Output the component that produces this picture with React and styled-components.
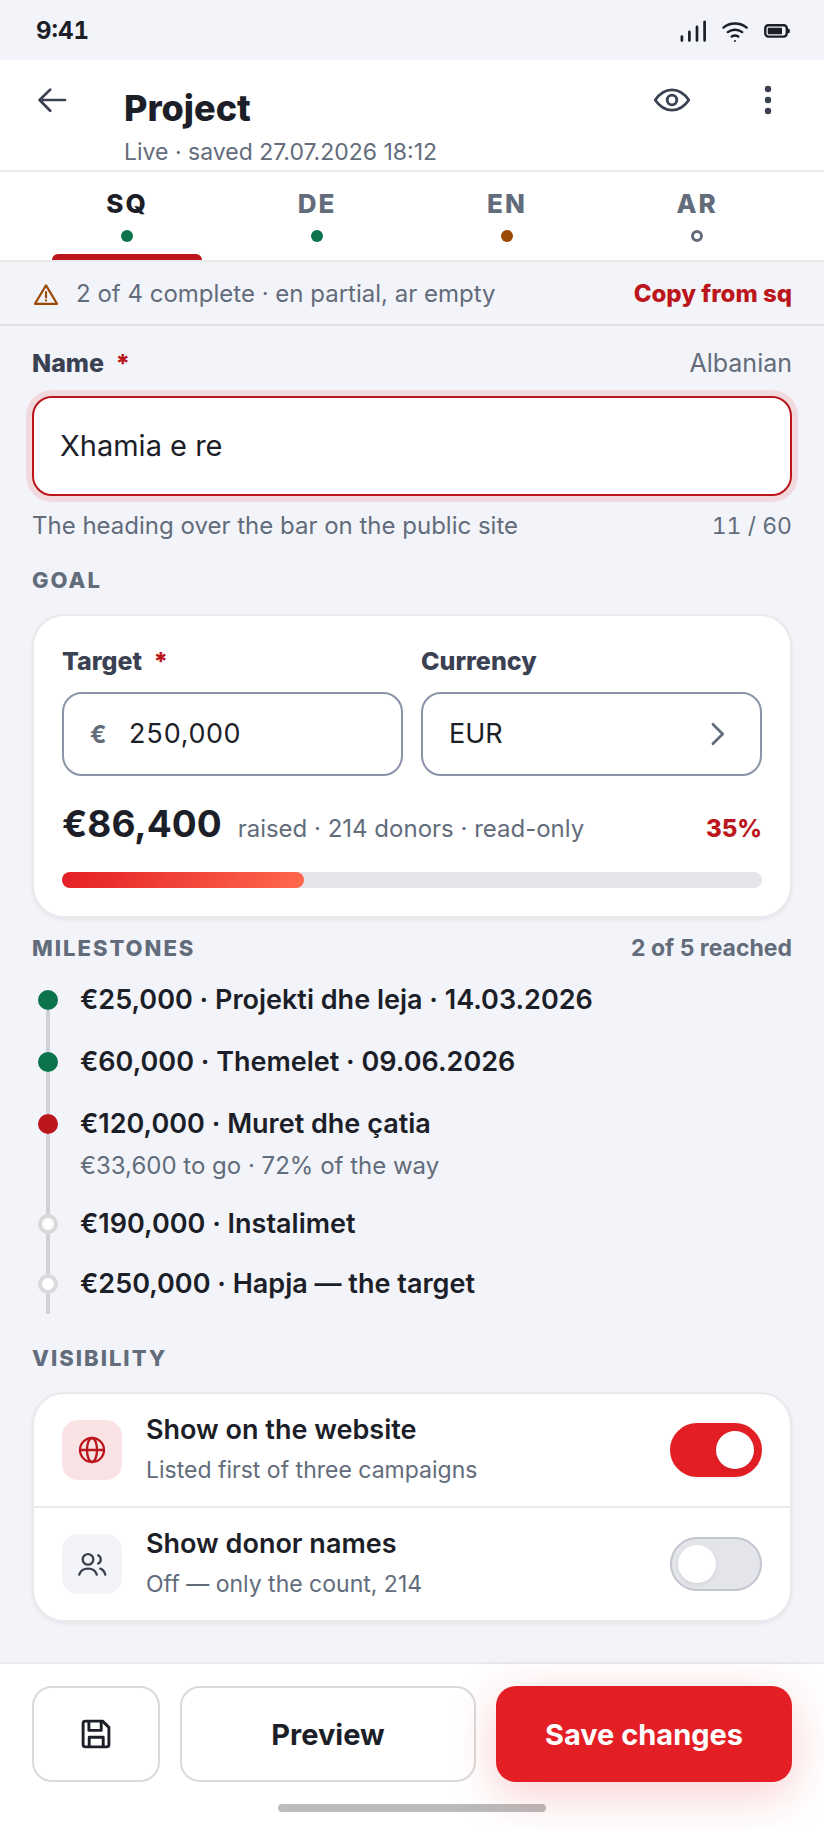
import React, { useState } from 'react'
import styled, { createGlobalStyle, ThemeProvider } from 'styled-components'

const theme = {
  bg: '#f3f4f9',
  surface: '#ffffff',
  ink: '#1c1e28',
  label: '#3a4152',
  muted: '#626c7b',
  line: '#e8e9eb',
  outline: '#d9dadb',
  field: '#8a93a8',
  track: '#e4e5ea',
  brand: '#e31e25',
  brandDark: '#bb161b',
  green: '#0d734d',
  amber: '#9c4a07',
}

const GlobalStyle = createGlobalStyle`
  *, *::before, *::after {
    box-sizing: border-box;
  }

  body {
    margin: 0;
    background: ${theme.bg};
    color: ${theme.ink};
    font-family: Inter, 'Liberation Sans', sans-serif;
    font-size: 24px;
  }

  button, input, select {
    font-family: inherit;
    color: inherit;
  }
`

const languages = [
  { code: 'SQ', status: 'complete' },
  { code: 'DE', status: 'complete' },
  { code: 'EN', status: 'partial' },
  { code: 'AR', status: 'empty' },
]

const milestones = [
  { text: '€25,000 · Projekti dhe leja · 14.03.2026', state: 'reached' },
  { text: '€60,000 · Themelet · 09.06.2026', state: 'reached' },
  {
    text: '€120,000 · Muret dhe çatia',
    note: '€33,600 to go · 72% of the way',
    state: 'current',
  },
  { text: '€190,000 · Instalimet', state: 'pending' },
  { text: '€250,000 · Hapja — the target', state: 'pending' },
]

function App() {
  const [language, setLanguage] = useState('SQ')
  const progress = 34.56

  return (
    <ThemeProvider theme={theme}>
      <GlobalStyle />
      <Page>
        <StatusBar>
          <Clock>9:41</Clock>
          <StatusIcons>
            <SignalIcon />
            <WifiIcon />
            <BatteryIcon />
          </StatusIcons>
        </StatusBar>

        <Header>
          <IconButton aria-label="Back">
            <BackIcon />
          </IconButton>
          <Heading>
            <Title>Project</Title>
            <Subtitle>Live · saved 27.07.2026 18:12</Subtitle>
          </Heading>
          <IconButton aria-label="View">
            <EyeIcon />
          </IconButton>
          <IconButton aria-label="More">
            <MoreIcon />
          </IconButton>
        </Header>

        <Tabs>
          {languages.map(({ code, status }) => (
            <Tab
              key={code}
              $active={code === language}
              aria-pressed={code === language}
              onClick={() => setLanguage(code)}
            >
              <TabLabel>{code}</TabLabel>
              <TabDot $status={status} />
              <TabBar $active={code === language} />
            </Tab>
          ))}
        </Tabs>

        <Notice>
          <WarningIcon />
          <NoticeText>2 of 4 complete · en partial, ar empty</NoticeText>
          <TextButton>Copy from sq</TextButton>
        </Notice>

        <Main>
          <LabelRow>
            <Label htmlFor="name">
              Name <Required>*</Required>
            </Label>
            <LabelHint>Albanian</LabelHint>
          </LabelRow>
          <NameInput id="name" defaultValue="Xhamia e re" />
          <HelpRow>
            <span>The heading over the bar on the public site</span>
            <Counter>11 / 60</Counter>
          </HelpRow>

          <SectionHead $top={24}>
            <SectionTitle>Goal</SectionTitle>
          </SectionHead>
          <GoalCard>
            <Fields>
              <Field>
                <Label htmlFor="target">
                  Target <Required>*</Required>
                </Label>
                <FieldBox>
                  <Prefix>€</Prefix>
                  <AmountInput id="target" defaultValue="250,000" />
                </FieldBox>
              </Field>
              <Field>
                <Label htmlFor="currency">Currency</Label>
                <FieldBox>
                  <CurrencySelect id="currency" defaultValue="EUR">
                    <option>EUR</option>
                  </CurrencySelect>
                  <ChevronIcon />
                </FieldBox>
              </Field>
            </Fields>
            <Raised>
              <RaisedValue>€86,400</RaisedValue>
              <RaisedNote>raised · 214 donors · read-only</RaisedNote>
              <RaisedShare>35%</RaisedShare>
            </Raised>
            <Progress>
              <ProgressFill style={{ width: `${progress}%` }} />
            </Progress>
          </GoalCard>

          <SectionHead $top={16}>
            <SectionTitle>Milestones</SectionTitle>
            <SectionNote>2 of 5 reached</SectionNote>
          </SectionHead>
          <Timeline>
            {milestones.map(({ text, note, state }) => (
              <Milestone key={text}>
                <Rail>
                  <RailLead />
                  <RailDot $state={state} />
                  <RailLine />
                </Rail>
                <MilestoneBody $state={state}>
                  <MilestoneText>{text}</MilestoneText>
                  {note && <MilestoneNote>{note}</MilestoneNote>}
                </MilestoneBody>
              </Milestone>
            ))}
          </Timeline>

          <SectionHead $top={30}>
            <SectionTitle>Visibility</SectionTitle>
          </SectionHead>
          <Card>
            <Setting
              id="website"
              title="Show on the website"
              note="Listed first of three campaigns"
              icon={<GlobeIcon />}
              highlighted
              defaultChecked
            />
            <Setting
              id="donors"
              title="Show donor names"
              note="Off — only the count, 214"
              icon={<UsersIcon />}
            />
          </Card>
        </Main>

        <Footer>
          <Actions>
            <ActionButton aria-label="Save draft">
              <SaveIcon />
            </ActionButton>
            <ActionButton>Preview</ActionButton>
            <PrimaryButton>Save changes</PrimaryButton>
          </Actions>
          <HomeIndicator />
        </Footer>
      </Page>
    </ThemeProvider>
  )
}

function Setting(props) {
  return (
    <SettingRow>
      <SettingIcon $highlighted={props.highlighted}>{props.icon}</SettingIcon>
      <SettingText htmlFor={props.id}>
        <SettingTitle>{props.title}</SettingTitle>
        <SettingNote>{props.note}</SettingNote>
      </SettingText>
      <Switch id={props.id} defaultChecked={props.defaultChecked} />
    </SettingRow>
  )
}

/* Icons */

function Icon({ size, stroke, children }) {
  return (
    <Svg
      width={size}
      height={size}
      viewBox={`0 0 ${size} ${size}`}
      fill="none"
      stroke="currentColor"
      strokeWidth={stroke}
      strokeLinecap="round"
      strokeLinejoin="round"
      aria-hidden="true"
    >
      {children}
    </Svg>
  )
}

const SignalIcon = () => (
  <Icon size={28} stroke={2.7}>
    <path d="M1.9 24.4V20.6M9.4 24.4V15.9M17 24.4V10.9M24.6 24.4V5.9" />
  </Icon>
)

const WifiIcon = () => (
  <Icon size={28} stroke={2.4}>
    <path d="M1.5 11.6C8 6.2 18 6.2 24.7 11.6" />
    <path d="M5.8 16.1C10 13 16 13 20.2 16.1" />
    <path d="M9.7 20.6C11.6 19.4 14.4 19.4 16.3 20.6" />
    <circle cx="13" cy="25" r="1" fill="currentColor" stroke="none" />
  </Icon>
)

const BatteryIcon = () => (
  <Icon size={28} stroke={2.4}>
    <rect x="1.3" y="9.2" width="21.5" height="11.4" rx="3" />
    <rect x="3.8" y="11.8" width="14.2" height="6.4" rx="0.6" fill="currentColor" stroke="none" />
    <path d="M24.6 13.9V15.9" />
  </Icon>
)

const BackIcon = () => (
  <Icon size={40} stroke={2.7}>
    <path d="M33 20H8M18.2 9.6L7.6 20L18.2 30.8" />
  </Icon>
)

const EyeIcon = () => (
  <Icon size={40} stroke={2.8}>
    <path d="M3.2 20C8 12.9 13.6 9.8 20 9.8S32 12.9 36.8 20C32 27.1 26.4 30.2 20 30.2S8 27.1 3.2 20Z" />
    <circle cx="20" cy="20" r="4.8" />
  </Icon>
)

const MoreIcon = () => (
  <Icon size={40} stroke={0}>
    <g fill="currentColor">
      <circle cx="20" cy="9" r="3.2" />
      <circle cx="20" cy="20" r="3.2" />
      <circle cx="20" cy="31" r="3.2" />
    </g>
  </Icon>
)

const WarningIcon = () => (
  <Icon size={28} stroke={2.2}>
    <path d="M14 6.4L25 24.8H3Z" />
    <path d="M14 13.2V18.4M14 21.4V21.6" />
  </Icon>
)

const ChevronIcon = () => (
  <Icon size={28} stroke={2.7}>
    <path d="M8.9 4.2L18.7 14L8.9 23.8" />
  </Icon>
)

const GlobeIcon = () => (
  <Icon size={32} stroke={2.3}>
    <circle cx="16" cy="16" r="12" />
    <ellipse cx="16" cy="16" rx="5" ry="12" />
    <path d="M4 16H28" />
  </Icon>
)

const UsersIcon = () => (
  <Icon size={32} stroke={2.3}>
    <circle cx="12" cy="11.4" r="5.3" />
    <path d="M3.2 26.6C4.5 22.4 7.8 20.6 12 20.6S19.6 22.4 20.8 26.6" />
    <path d="M22.2 7.2C25.6 9 25.6 13.8 22.2 15.6" />
    <path d="M24.3 20.6C27 21.6 28.6 23.8 29.3 26.6" />
  </Icon>
)

const SaveIcon = () => (
  <Icon size={32} stroke={2.9}>
    <path d="M5.4 3.1H22.6L28.9 9.4V26.6C28.9 27.9 27.9 28.9 26.6 28.9H5.4C4.1 28.9 3.1 27.9 3.1 26.6V5.4C3.1 4.1 4.1 3.1 5.4 3.1Z" />
    <path d="M8.9 3.4V12.4H21.2V3.4" />
    <path d="M9.2 28.6V19.2H23.2V28.6" />
  </Icon>
)

const Svg = styled.svg`
  display: block;
  flex: none;
`

/* Layout */

const Page = styled.div`
  display: flex;
  flex-direction: column;
  min-height: 100vh;
`

const StatusBar = styled.div`
  display: flex;
  justify-content: space-between;
  align-items: center;
  height: 60px;
  padding: 0 32px 0 36px;
`

const Clock = styled.div`
  font-weight: 700;
  font-size: 24px;
  font-variant-numeric: tabular-nums;
`

const StatusIcons = styled.div`
  display: flex;
  gap: 14px;
`

const Header = styled.header`
  display: flex;
  align-items: flex-start;
  padding: 0 8px 0 4px;
  background: ${(props) => props.theme.surface};
  border-bottom: 2px solid ${(props) => props.theme.line};
`

const IconButton = styled.button`
  display: flex;
  justify-content: center;
  align-items: center;
  width: 96px;
  height: 80px;
  padding: 0;
  border: 0;
  background: none;
  color: ${(props) => props.theme.label};
`

const Heading = styled.div`
  flex: 1;
  padding: 24px 0 2px 24px;
`

const Title = styled.h1`
  margin: 0 0 4px;
  font-weight: 800;
  font-size: 36px;
  line-height: 48px;
`

const Subtitle = styled.div`
  font-size: 23px;
  line-height: 32px;
  color: ${(props) => props.theme.muted};
`

const Tabs = styled.nav`
  display: grid;
  grid-template-columns: repeat(4, 1fr);
  padding: 0 32px;
  background: ${(props) => props.theme.surface};
  border-bottom: 2px solid ${(props) => props.theme.line};
`

const Tab = styled.button`
  display: flex;
  flex-direction: column;
  align-items: center;
  padding: 14px 20px 0;
  border: 0;
  background: none;
  color: ${(props) => (props.$active ? props.theme.ink : props.theme.muted)};
`

const TabLabel = styled.span`
  font-weight: 800;
  font-size: 26px;
  line-height: 36px;
  letter-spacing: 2px;
`

const TabDot = styled.span`
  width: 12px;
  height: 12px;
  margin: 8px 0 12px;
  border-radius: 50%;
  background: ${(props) =>
    ({ complete: props.theme.green, partial: props.theme.amber })[props.$status]};
  border: ${(props) => (props.$status === 'empty' ? `3px solid ${props.theme.muted}` : 0)};
`

const TabBar = styled.span`
  align-self: stretch;
  height: 6px;
  border-radius: 6px 6px 0 0;
  background: ${(props) => (props.$active ? props.theme.brandDark : 'transparent')};
`

const Notice = styled.div`
  display: flex;
  align-items: center;
  gap: 16px;
  height: 64px;
  padding: 0 32px;
  border-bottom: 2px solid #dfe0e6;
  color: ${(props) => props.theme.amber};
`

const NoticeText = styled.span`
  flex: 1;
  color: ${(props) => props.theme.muted};
`

const TextButton = styled.button`
  padding: 0;
  border: 0;
  background: none;
  font-weight: 800;
  font-size: 24px;
  color: ${(props) => props.theme.brandDark};
`

const Main = styled.main`
  flex: 1;
  padding: 20px 32px 40px;
`

const LabelRow = styled.div`
  display: flex;
  justify-content: space-between;
  margin-bottom: 16px;
`

const Label = styled.label`
  font-weight: 800;
  font-size: 25px;
  line-height: 34px;
  color: ${(props) => props.theme.label};
`

const Required = styled.span`
  margin-left: 6px;
  color: ${(props) => props.theme.brandDark};
`

const LabelHint = styled.span`
  font-size: 25px;
  line-height: 34px;
  color: ${(props) => props.theme.muted};
`

const NameInput = styled.input`
  display: block;
  width: 100%;
  height: 100px;
  padding: 0 26px 2px;
  border: 2px solid ${(props) => props.theme.brandDark};
  border-radius: 20px;
  outline: none;
  background: ${(props) => props.theme.surface};
  box-shadow: 0 0 0 6px rgba(227, 30, 37, 0.12);
  font-size: 29px;
`

const HelpRow = styled.div`
  display: flex;
  justify-content: space-between;
  margin-top: 14px;
  line-height: 32px;
  color: ${(props) => props.theme.muted};
`

const Counter = styled.span`
  font-size: 23px;
  font-variant-numeric: tabular-nums;
`

const SectionHead = styled.div`
  display: flex;
  justify-content: space-between;
  align-items: center;
  margin: ${(props) => props.$top}px 0 20px;
`

const SectionTitle = styled.h2`
  margin: 0;
  font-weight: 800;
  font-size: 22px;
  line-height: 28px;
  letter-spacing: 2px;
  text-transform: uppercase;
  color: ${(props) => props.theme.muted};
`

const SectionNote = styled.span`
  font-weight: 700;
  font-size: 23px;
  line-height: 28px;
  color: ${(props) => props.theme.muted};
`

const Card = styled.section`
  border: 2px solid ${(props) => props.theme.line};
  border-radius: 32px;
  background: ${(props) => props.theme.surface};
  box-shadow: 0 2px 4px rgba(28, 30, 40, 0.06);
`

const GoalCard = styled(Card)`
  padding: 28px;
`

const Fields = styled.div`
  display: grid;
  grid-template-columns: repeat(2, minmax(0, 1fr));
  gap: 18px;
`

const Field = styled.div`
  display: flex;
  flex-direction: column;
  gap: 14px;
`

const FieldBox = styled.div`
  display: flex;
  align-items: center;
  height: 84px;
  padding: 0 28px 0 26px;
  border: 2px solid ${(props) => props.theme.field};
  border-radius: 20px;
  color: ${(props) => props.theme.muted};
`

const Prefix = styled.span`
  font-weight: 700;
  font-size: 24px;
`

const AmountInput = styled.input`
  flex: 1;
  min-width: 0;
  padding: 0 0 2px 22px;
  border: 0;
  outline: none;
  background: none;
  font-size: 27px;
  font-variant-numeric: tabular-nums;
  color: ${(props) => props.theme.ink};
`

const CurrencySelect = styled.select`
  flex: 1;
  min-width: 0;
  padding: 0 0 2px;
  appearance: none;
  border: 0;
  outline: none;
  background: none;
  font-size: 27px;
  color: ${(props) => props.theme.ink};
`

const Raised = styled.div`
  display: flex;
  align-items: baseline;
  margin: 24px 0;
  line-height: 32px;
`

const RaisedValue = styled.span`
  font-weight: 700;
  font-size: 37px;
  line-height: 48px;
`

const RaisedNote = styled.span`
  flex: 1;
  margin-left: 16px;
  color: ${(props) => props.theme.muted};
`

const RaisedShare = styled.span`
  font-weight: 800;
  color: ${(props) => props.theme.brandDark};
`

const Progress = styled.div`
  height: 16px;
  border-radius: 8px;
  background: ${(props) => props.theme.track};
`

const ProgressFill = styled.div`
  height: 100%;
  border-radius: 8px;
  background: linear-gradient(135deg, ${(props) => props.theme.brand}, #ff6a4d);
`

const Timeline = styled.ol`
  margin: 0;
  padding: 0 0 0 6px;
  list-style: none;
`

const Milestone = styled.li`
  display: flex;
  gap: 22px;
`

const Rail = styled.div`
  display: flex;
  flex-direction: column;
  align-items: center;
  width: 20px;
`

const RailLine = styled.div`
  flex: 1;
  width: 4px;
  background: #cfd1d6;
`

const RailLead = styled(RailLine)`
  flex: none;
  height: 8px;

  ${Milestone}:first-child & {
    background: none;
  }
`

const RailDot = styled.div`
  width: 20px;
  height: 20px;
  border-radius: 50%;
  border: 4px solid
    ${(props) =>
      ({
        reached: props.theme.green,
        current: props.theme.brandDark,
        pending: props.theme.outline,
      })[props.$state]};
  background: ${(props) =>
    ({
      reached: props.theme.green,
      current: props.theme.brandDark,
      pending: props.theme.surface,
    })[props.$state]};
`

const MilestoneBody = styled.div`
  padding-bottom: ${(props) => (props.$state === 'reached' ? 26 : 24)}px;

  ${Milestone}:last-child & {
    padding-bottom: 12px;
  }
`

const MilestoneText = styled.div`
  font-weight: 600;
  font-size: 27px;
  line-height: 36px;
`

const MilestoneNote = styled.div`
  margin-top: 8px;
  line-height: 32px;
  color: ${(props) => props.theme.muted};
`

const SettingRow = styled.div`
  display: flex;
  align-items: center;
  padding: 18px 28px;

  & + & {
    border-top: 2px solid ${(props) => props.theme.line};
  }
`

const SettingIcon = styled.div`
  display: flex;
  justify-content: center;
  align-items: center;
  width: 60px;
  height: 60px;
  margin-right: 24px;
  border-radius: 16px;
  background: ${(props) => (props.$highlighted ? '#fae3e4' : props.theme.bg)};
  color: ${(props) => (props.$highlighted ? props.theme.brandDark : props.theme.label)};
`

const SettingText = styled.label`
  display: flex;
  flex: 1;
  flex-direction: column;
  gap: 4px;
  line-height: 36px;
`

const SettingTitle = styled.span`
  font-weight: 600;
  font-size: 27px;
`

const SettingNote = styled.span`
  font-size: 23px;
  color: ${(props) => props.theme.muted};
`

const Switch = styled.input.attrs({ type: 'checkbox', role: 'switch' })`
  display: flex;
  align-items: center;
  width: 92px;
  height: 54px;
  margin: 0;
  padding: 0 6px;
  appearance: none;
  border: 2px solid #c2c5cd;
  border-radius: 27px;
  background: ${(props) => props.theme.track};

  &::before {
    content: '';
    width: 38px;
    height: 38px;
    border-radius: 50%;
    background: ${(props) => props.theme.surface};
    box-shadow: 0 2px 4px rgba(28, 30, 40, 0.08);
  }

  &:checked {
    justify-content: flex-end;
    border-color: ${(props) => props.theme.brand};
    background: ${(props) => props.theme.brand};
  }
`

const Footer = styled.footer`
  display: flex;
  flex-direction: column;
  align-items: center;
  gap: 22px;
  padding: 22px 32px 18px;
  background: ${(props) => props.theme.surface};
  border-top: 2px solid ${(props) => props.theme.line};
`

const Actions = styled.div`
  display: grid;
  grid-template-columns: 128px 1fr 1fr;
  gap: 20px;
  width: 100%;
`

const ActionButton = styled.button`
  display: flex;
  justify-content: center;
  align-items: center;
  height: 96px;
  padding: 0;
  border: 2px solid ${(props) => props.theme.outline};
  border-radius: 20px;
  background: ${(props) => props.theme.surface};
  font-weight: 700;
  font-size: 29px;
  color: ${(props) => props.theme.ink};
`

/* Positioned so that its glow lies over the home indicator */
const PrimaryButton = styled(ActionButton)`
  position: relative;
  z-index: 1;
  border: 0;
  background: ${(props) => props.theme.brand};
  box-shadow: 0 12px 48px rgba(227, 30, 37, 0.22);
  color: ${(props) => props.theme.surface};
`

const HomeIndicator = styled.div`
  width: 268px;
  height: 8px;
  border-radius: 4px;
  background: #babbbc;
`

export default App
